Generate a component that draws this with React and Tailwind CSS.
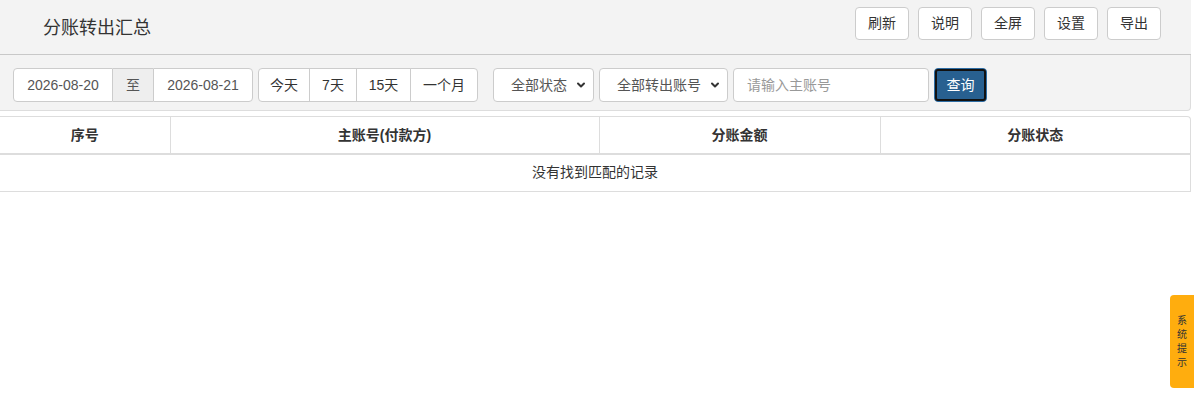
import React from "react";
import { ChevronDown } from "lucide-react";

const font = { fontFamily: '"Liberation Sans", "Noto Sans CJK SC", sans-serif' };

const HeaderButton = ({ label }) => (
  <button className="h-[33px] w-[54px] rounded-[4px] border border-[#ccc] bg-white text-[14px] text-[#333]">
    {label}
  </button>
);

const SelectBox = ({ label, width }) => (
  <div
    className={`flex h-[34px] items-center justify-between rounded-[4px] border border-[#ccc] bg-white pl-[17px] pr-[6px] text-[14px] text-[#555] ${width}`}
  >
    <span>{label}</span>
    <ChevronDown size={12} strokeWidth={4} className="text-[#333]" />
  </div>
);

const App = () => {
  const ranges = [
    { label: "今天", w: "w-[52px]" },
    { label: "7天", w: "w-[48px]" },
    { label: "15天", w: "w-[55px]" },
    { label: "一个月", w: "w-[68px]" },
  ];

  return (
    <div className="relative h-[397px] w-[1194px] overflow-hidden bg-white" style={font}>
      <div className="w-[1191px]">
        {/* header */}
        <div className="flex h-[55px] items-start justify-between border-b border-[#c8c8c8] bg-[#f3f3f3] pl-[43px] pr-[30px]">
          <h1 className="pt-[16px] text-[18px] leading-[24px] text-[#333]">分账转出汇总</h1>
          <div className="flex gap-[9px] pt-[7px]">
            {["刷新", "说明", "全屏", "设置", "导出"].map((b) => (
              <HeaderButton key={b} label={b} />
            ))}
          </div>
        </div>

        {/* filter bar */}
        <div className="flex h-[56px] items-start rounded-br-[4px] border-b border-r border-[#ddd] bg-[#f3f3f3] pl-[13px] pt-[13px]">
          <div className="flex h-[34px] text-[14px] text-[#555]">
            <div className="flex w-[100px] items-center justify-center rounded-l-[4px] border border-[#ccc] bg-white">
              2026-08-20
            </div>
            <div className="flex w-[40px] items-center justify-center border-y border-[#ccc] bg-[#eee]">至</div>
            <div className="flex w-[100px] items-center justify-center rounded-r-[4px] border border-[#ccc] bg-white">
              2026-08-21
            </div>
          </div>

          <div className="ml-[5px] flex h-[34px] text-[14px] text-[#333]">
            {ranges.map((r, i) => (
              <button
                key={r.label}
                className={`h-full border border-[#ccc] bg-white ${r.w} ${i > 0 ? "-ml-px" : ""} ${
                  i === 0 ? "rounded-l-[4px]" : ""
                } ${i === ranges.length - 1 ? "rounded-r-[4px]" : ""}`}
              >
                {r.label}
              </button>
            ))}
          </div>

          <div className="ml-[15px] flex items-center gap-[5px]">
            <SelectBox label="全部状态" width="w-[101px]" />
            <SelectBox label="全部转出账号" width="w-[129px]" />
            <div className="flex h-[34px] w-[196px] items-center rounded-[4px] border border-[#ccc] bg-white pl-[13px] text-[14px] text-[#999]">
              请输入主账号
            </div>
            <button className="h-[34px] w-[53px] rounded-[4px] border border-[#2e6da4] bg-[#286090] text-[14px] text-white outline-2 -outline-offset-[3px] outline-[#111]">
              查询
            </button>
          </div>
        </div>

        {/* table */}
        <div className="mt-[5px] overflow-hidden rounded-tr-[4px] border-r border-t border-[#ddd]">
          <table className="w-full table-fixed border-collapse text-[14px] text-[#333]">
            <colgroup>
              <col className="w-[170px]" />
              <col className="w-[429px]" />
              <col className="w-[281px]" />
              <col />
            </colgroup>
            <thead>
              <tr className="h-[37px] border-b-2 border-[#ddd]">
                <th className="border-r border-[#ddd] font-bold">序号</th>
                <th className="border-r border-[#ddd] font-bold">主账号(付款方)</th>
                <th className="border-r border-[#ddd] font-bold">分账金额</th>
                <th className="font-bold">分账状态</th>
              </tr>
            </thead>
            <tbody>
              <tr className="h-[37px] border-b border-[#ddd]">
                <td colSpan={4} className="text-center">
                  没有找到匹配的记录
                </td>
              </tr>
            </tbody>
          </table>
        </div>
      </div>

      {/* side tab */}
      <div className="absolute right-0 top-[295px] flex h-[93px] w-[24px] flex-col items-center justify-center rounded-l-[4px] bg-[#ffad0e] text-[10px] leading-[14px] text-[#333]">
        <span>系</span>
        <span>统</span>
        <span>提</span>
        <span>示</span>
      </div>
    </div>
  );
};

export default App;
